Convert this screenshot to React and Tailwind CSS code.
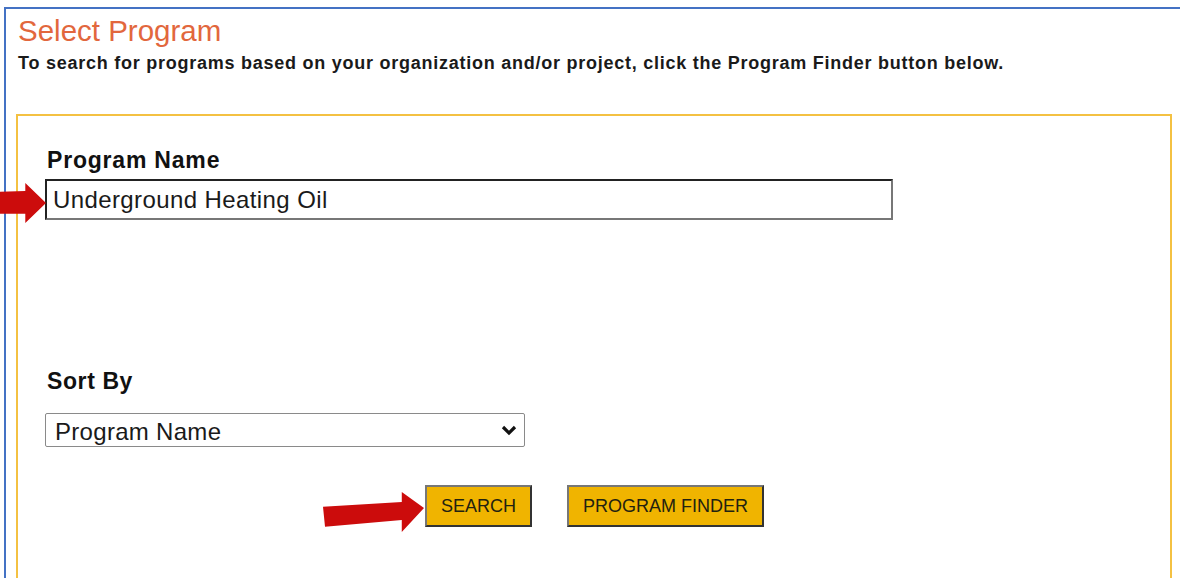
import { useState } from "react";

// Red callout arrow pointing right
function Arrow({ className, points }) {
  return (
    <svg className={className} viewBox="0 0 100 100" preserveAspectRatio="none">
      <polygon points={points} fill="#cc0c0c" />
    </svg>
  );
}

export default function App() {
  const [name, setName] = useState("Underground Heating Oil");
  const [sort, setSort] = useState("name");

  return (
    <div
      className="min-h-screen bg-white pt-[7px] pl-[4px] overflow-hidden"
      style={{ fontFamily: '"Liberation Sans", Arial, sans-serif' }}
    >
      <div className="border-t-2 border-l-2 border-[#4472c4] h-[600px] relative">
        <h1 className="pl-[12px] pt-[4px] text-[29.5px] leading-[36px] text-[#e2673d]">
          Select Program
        </h1>
        <p className="pl-[12px] mt-[3px] text-[18px] leading-[22px] tracking-[0.75px] font-bold text-[#1a1a1a]">
          To search for programs based on your organization and/or project, click the Program Finder button below.
        </p>

        <div className="mt-[40px] ml-[10px] w-[1156px] h-[500px] border-2 border-[#f4c142] pl-[29px] pt-[30px]">
          <label className="block text-[23px] leading-[28px] tracking-[0.8px] font-bold text-[#111]">
            Program Name
          </label>
          <input
            value={name}
            onChange={(e) => setName(e.target.value)}
            className="mt-[5px] -ml-[2px] block w-[848px] h-[41px] bg-white border-2 border-t-[#222] border-l-[#222] border-r-[#777] border-b-[#777] px-[6px] text-[24px] tracking-[0.4px] text-[#1a1a1a] outline-none"
          />

          <label className="block mt-[147px] text-[23px] leading-[28px] tracking-[0.6px] font-bold text-[#111]">
            Sort By
          </label>
          <div className="relative mt-[18px] -ml-[2px] w-[480px]">
            <select
              value={sort}
              onChange={(e) => setSort(e.target.value)}
              className="appearance-none block w-full h-[34px] bg-white border border-[#8a8a8a] rounded-[2px] pl-[9px] text-[24px] tracking-[0.3px] text-[#1a1a1a] outline-none"
            >
              <option value="name">Program Name</option>
              <option value="number">Program Number</option>
            </select>
            <svg
              className="absolute right-[8px] top-[11px] w-[16px] h-[12px] pointer-events-none"
              viewBox="0 0 16 12"
            >
              <path d="M2 3 L8 9 L14 3" fill="none" stroke="#111" strokeWidth="3.2" />
            </svg>
          </div>

          <div className="flex gap-[35px] mt-[38px] ml-[378px]">
            <button className="h-[42px] px-[14px] bg-[#f0b400] border-2 border-t-[#777] border-l-[#777] border-r-[#333] border-b-[#333] text-[18px] text-[#222210]">
              SEARCH
            </button>
            <button className="h-[42px] px-[14px] bg-[#f0b400] border-2 border-t-[#777] border-l-[#777] border-r-[#333] border-b-[#333] text-[18px] text-[#222210]">
              PROGRAM FINDER
            </button>
          </div>
        </div>
      </div>

      <Arrow
        className="absolute left-0 top-[183px] w-[46px] h-[40px]"
        points="0,22 55,20 55,0 100,50 55,100 55,77 0,77"
      />
      <Arrow
        className="absolute left-[323px] top-[492px] w-[101px] h-[40px]"
        points="0,37 78,25 78,0 100,40 78,100 78,70 2,87"
      />
    </div>
  );
}
